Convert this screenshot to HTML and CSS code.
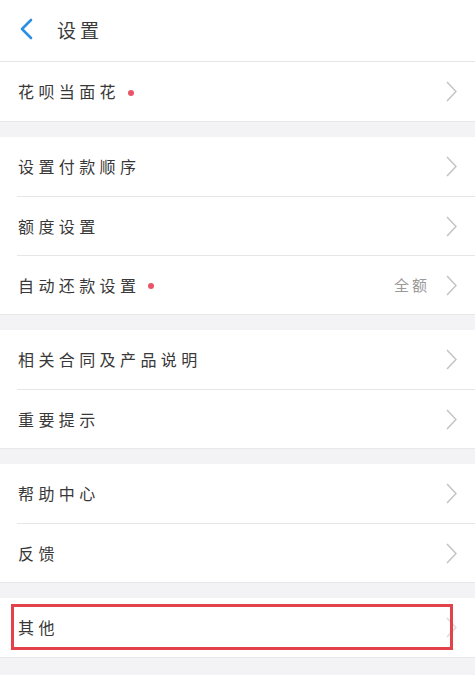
FILE: index.html
```html
<!DOCTYPE html>
<html lang="zh-CN">
<head>
    <meta charset="UTF-8">
    <meta name="viewport" content="width=device-width, initial-scale=1.0">
    <title>设置</title>
    <link rel="stylesheet" href="styles.css">
</head>
<body>
    <header class="topbar">
        <svg class="back" width="14" height="22" viewBox="0 0 14 22">
            <polyline points="12,2 3,11 12,20" fill="none" stroke="#2b8fe3" stroke-width="2.6" stroke-linecap="round" stroke-linejoin="round"/>
        </svg>
        <span class="title">设置</span>
    </header>

    <div class="group">
        <div class="row"><span class="label">花呗当面花</span><i class="dot"></i><span class="arrow"></span></div>
    </div>

    <div class="group">
        <div class="row"><span class="label">设置付款顺序</span><span class="arrow"></span></div>
        <div class="row"><span class="label">额度设置</span><span class="arrow"></span></div>
        <div class="row"><span class="label">自动还款设置</span><i class="dot"></i><span class="value">全额</span><span class="arrow"></span></div>
    </div>

    <div class="group">
        <div class="row"><span class="label">相关合同及产品说明</span><span class="arrow"></span></div>
        <div class="row"><span class="label">重要提示</span><span class="arrow"></span></div>
    </div>

    <div class="group">
        <div class="row"><span class="label">帮助中心</span><span class="arrow"></span></div>
        <div class="row"><span class="label">反馈</span><span class="arrow"></span></div>
    </div>

    <div class="group">
        <div class="row marked"><span class="label">其他</span><span class="arrow faint"></span></div>
    </div>
</body>
</html>
```

FILE: styles.css
```css
body {
    margin: 0;
    background: #f3f3f6;
    font-family: "Noto Sans CJK SC", "Noto Sans", sans-serif;
    color: #333;
}

.topbar {
    height: 62px;
    background: #fff;
    border-bottom: 1px solid #e4e4e6;
    display: flex;
    align-items: center;
    padding-left: 19px;
    padding-bottom: 3px;
    box-sizing: border-box;
}

.title {
    margin-left: 24px;
    font-size: 19px;
    letter-spacing: 4px;
    color: #3a3a3a;
}

.group {
    background: #fff;
    border-bottom: 1px solid #e8e8ea;
    margin-bottom: 15px;
}

.row {
    position: relative;
    height: 59px;
    margin-left: 17px;
    padding-left: 1px;
    padding-right: 18px;
    display: flex;
    align-items: center;
}

.row + .row {
    border-top: 1px solid #e6e6e8;
    height: 58px;
}

.label {
    font-size: 16px;
    letter-spacing: 4.4px;
    color: #383838;
    margin-top: -1px;
}

.dot {
    width: 6px;
    height: 6px;
    border-radius: 50%;
    background: #ea5468;
    margin-left: 8px;
    margin-top: 2px;
}

.value {
    margin-left: auto;
    margin-right: 16px;
    font-size: 15px;
    letter-spacing: 3px;
    color: #9a9a9a;
    margin-top: -1px;
}

.arrow {
    margin-left: auto;
    width: 11px;
    height: 21px;
    background: no-repeat center / 11px 21px url("data:image/svg+xml,%3Csvg xmlns='http://www.w3.org/2000/svg' width='11' height='21' viewBox='0 0 11 21'%3E%3Cpolyline points='1,1 10,10.5 1,20' fill='none' stroke='%23c5c5c9' stroke-width='1.6'/%3E%3C/svg%3E");
}

.value + .arrow {
    margin-left: 0;
}

.arrow.faint {
    opacity: 0.6;
}

.marked::after {
    content: "";
    position: absolute;
    left: -6px;
    right: 22px;
    top: 6px;
    bottom: 7px;
    border: 3px solid #e2424a;
}
```
